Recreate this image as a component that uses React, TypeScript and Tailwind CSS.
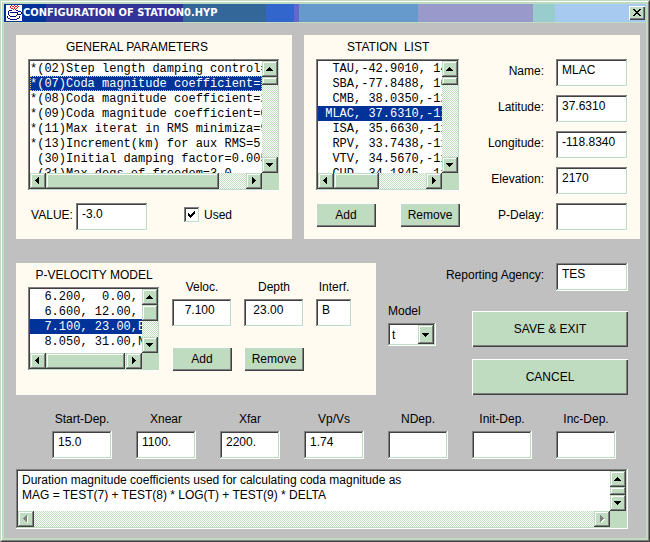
import React from "react";

type Direction = "up" | "down" | "left" | "right";

const sunkenEdge =
  "bg-white shadow-[inset_-1px_-1px_#fff,inset_1px_1px_#808080,inset_-2px_-2px_#c0dcc0,inset_2px_2px_#404040]";
const raised =
  "bg-[#c0dcc0] shadow-[inset_1px_1px_#fff,inset_-1px_-1px_#404040,inset_-2px_-2px_#808080]";
const knob =
  "bg-[#c0dcc0] shadow-[inset_-1px_-1px_#404040,inset_1px_1px_#c0dcc0,inset_-2px_-2px_#808080,inset_2px_2px_#fff]";
const track =
  "bg-[repeating-conic-gradient(#c0dcc0_0_25%,#fff_0_50%)] bg-[length:2px_2px]";

const arrows: Record<Direction, string> = {
  up: "M7 6h1v1h1v1h1v1h1v1H4V9h1V8h1V7h1z",
  down: "M4 6h7v1h-1v1H9v1H8v1H7V9H6V8H5V7H4z",
  left: "M9 4v7H8v-1H7V9H6V8H5V7h1V6h1V5h1V4z",
  right: "M6 4v7h1v-1h1V9h1V8h1V7H9V6H8V5H7V4z",
};

function Arrow({ direction, disabled = false }: { direction: Direction; disabled?: boolean }) {
  return (
    <svg viewBox="0 0 16 16" className="block size-4" shapeRendering="crispEdges" aria-hidden="true">
      {disabled && <path d={arrows[direction]} fill="#fff" transform="translate(1 1)" />}
      <path d={arrows[direction]} fill={disabled ? "#808080" : "#000"} />
    </svg>
  );
}

function ScrollButton({ direction, disabled = false }: { direction: Direction; disabled?: boolean }) {
  return (
    <button type="button" disabled={disabled} aria-label={`Scroll ${direction}`} className={`size-4 shrink-0 ${knob}`}>
      <Arrow direction={direction} disabled={disabled} />
    </button>
  );
}

function VerticalBar({ thumb }: { thumb: string }) {
  return (
    <div className={`flex w-4 flex-col ${track}`}>
      <ScrollButton direction="up" />
      <div className={`${thumb} ${knob}`} />
      <div className="flex-1" />
      <ScrollButton direction="down" />
    </div>
  );
}

function HorizontalBar({ thumb }: { thumb?: string }) {
  return (
    <div className={`flex h-4 ${track}`}>
      <ScrollButton direction="left" disabled={!thumb} />
      {thumb && <div className={`${thumb} ${knob}`} />}
      <div className="flex-1" />
      <ScrollButton direction="right" disabled={!thumb} />
    </div>
  );
}

interface ListProps {
  label: string;
  items: string[];
  selected: number;
  focused?: boolean;
  size: string;
  vThumb: string;
  hThumb: string;
}

function ListBox({ label, items, selected, focused, size, vThumb, hThumb }: ListProps) {
  return (
    <div className={`grid grid-cols-[minmax(0,1fr)_16px] grid-rows-[minmax(0,1fr)_16px] p-[2px] ${size} ${sunkenEdge}`}>
      <ul
        role="listbox"
        aria-label={label}
        className="overflow-hidden font-['Liberation_Mono','Courier_New',monospace] text-[12px] leading-[17px] whitespace-pre"
      >
        {items.map((item, i) => (
          <li
            key={item}
            role="option"
            aria-selected={i === selected}
            className={`h-[15px] ${i === selected ? "bg-[#003399] text-white" : ""} ${
              focused && i === selected ? "outline-1 -outline-offset-1 outline-[#e0c060] outline-dotted" : ""
            }`}
          >
            {item}
          </li>
        ))}
      </ul>
      <VerticalBar thumb={vThumb} />
      <HorizontalBar thumb={hThumb} />
      <div className="bg-[#c0dcc0]" />
    </div>
  );
}

function TextBox({ id, value, width }: { id: string; value: string; width: string }) {
  return (
    <input
      id={id}
      type="text"
      defaultValue={value}
      className={`h-7 shrink-0 rounded-none pt-[2px] pr-1 pb-2 pl-[6px] leading-4 outline-none ${width} ${sunkenEdge}`}
    />
  );
}

function PushButton({ children, size }: { children: React.ReactNode; size: string }) {
  return (
    <button type="button" className={`${size} ${raised}`}>
      {children}
    </button>
  );
}

function SideField({ id, label, value }: { id: string; label: string; value: string }) {
  return (
    <div className="flex justify-end gap-3">
      <label htmlFor={id} className="leading-6">
        {label}
      </label>
      <TextBox id={id} value={value} width="w-[72px]" />
    </div>
  );
}

function TopField({ id, label, value, width }: { id: string; label: string; value: string; width: string }) {
  return (
    <div className={`flex flex-col ${width}`}>
      <label htmlFor={id} className="text-center leading-6 whitespace-nowrap">
        {label}
      </label>
      <TextBox id={id} value={value} width="w-full" />
    </div>
  );
}

const parameters = [
  "*(02)Step length damping control=",
  "*(07)Coda magnitude coefficient=-",
  "*(08)Coda magnitude coefficient=2",
  "*(09)Coda magnitude coefficient=0",
  "*(11)Max iterat in RMS minimiza=9",
  "*(13)Increment(km) for aux RMS=5.",
  " (30)Initial damping factor=0.005",
  " (31)Max degs of freedom=3.0",
];

const stations = [
  "  TAU,-42.9010, 14",
  "  SBA,-77.8488, 16",
  "  CMB, 38.0350,-12",
  " MLAC, 37.6310,-11",
  "  ISA, 35.6630,-11",
  "  RPV, 33.7438,-11",
  "  VTV, 34.5670,-11",
  "  CUD, 34.1845,-11",
];

const layers = ["  6.200,  0.00,", "  6.600, 12.00,", "  7.100, 23.00,B", "  8.050, 31.00,N"];

const stationFields = [
  { id: "name", label: "Name:", value: "MLAC" },
  { id: "latitude", label: "Latitude:", value: "37.6310" },
  { id: "longitude", label: "Longitude:", value: "-118.8340" },
  { id: "elevation", label: "Elevation:", value: "2170" },
  { id: "pdelay", label: "P-Delay:", value: "" },
];

const controlFields = [
  { id: "start", label: "Start-Dep.", value: "15.0" },
  { id: "xnear", label: "Xnear", value: "1100." },
  { id: "xfar", label: "Xfar", value: "2200." },
  { id: "vpvs", label: "Vp/Vs", value: "1.74" },
  { id: "ndep", label: "NDep.", value: "" },
  { id: "init", label: "Init-Dep.", value: "" },
  { id: "inc", label: "Inc-Dep.", value: "" },
];

function JavaCup() {
  return (
    <svg viewBox="0 0 16 16" className="size-4 shrink-0 bg-white" shapeRendering="crispEdges" aria-hidden="true">
      <path
        fill="#e02020"
        d="M5 0h1v1H5zM8 0h1v1H8zM11 0h1v1h-1zM4 1h1v2H4zM6 1h2v1H6zM9 1h2v1H9zM12 1h1v1h-1zM5 3h2v1H5zM8 2h1v2H8zM11 2h1v1h-1zM10 3h1v1h-1zM7 4h1v1H7zM9 4h1v1H9z"
      />
      <path
        fill="#000080"
        d="M3 5h3v1H3zM10 5h2v1h-2zM2 6h1v4H2zM4 7h7v1H4zM12 6h3v1h-3zM11 7h1v3h-1zM15 7h1v2h-1zM12 9h3v1h-3zM3 10h1v1H3zM10 10h1v1h-1zM4 11h6v1H4zM1 11h1v2H1zM13 11h1v2h-1zM2 13h2v1H2zM11 13h2v1h-2zM4 14h7v1H4z"
      />
    </svg>
  );
}

function TitleBar() {
  return (
    <header className="flex h-[18px] items-center bg-[linear-gradient(90deg,#003399_6.5%,#333399_6.5%_27.9%,#336699_27.9%_40.8%,#3366cc_40.8%_45.2%,#6666cc_45.2%_46%,#6699cc_46%_64.5%,#9999cc_64.5%_82.4%,#99cccc_82.4%_85.8%,#a6caf0_85.8%)] pr-px pl-[2px]">
      <JavaCup />
      <h1 className="flex-1 pl-px font-['DejaVu_Sans_Condensed','DejaVu_Sans',sans-serif] text-[11px] leading-[18px] font-bold whitespace-nowrap text-white">
        CONFIGURATION OF STATION0.HYP
      </h1>
      <button type="button" aria-label="Close" className={`flex h-[14px] w-4 justify-center ${raised}`}>
        <svg viewBox="0 0 16 14" className="h-[14px] w-4" shapeRendering="crispEdges" aria-hidden="true">
          <path
            d="M4 3h2v1h1v1h2V4h1V3h2v1h-1v1h-1v1H9v1h1v1h1v1h1v1h-2V9H9V8H7v1H6v1H4V9h1V8h1V7h1V6H6V5H5V4H4z"
            fill="#000"
          />
        </svg>
      </button>
    </header>
  );
}

export default function App() {
  return (
    <div className="border border-t-[#c0dcc0] border-r-[#404040] border-b-[#404040] border-l-[#c0dcc0] font-['Liberation_Sans',Arial,sans-serif] text-[12px] leading-4 text-black">
      <div className="border border-t-white border-r-[#808080] border-b-[#808080] border-l-white bg-[#c0dcc0] p-[2px]">
        <TitleBar />
        <main className="mt-px flex flex-col bg-[#c0c0c0] pt-3 pr-[6px] pb-[9px] pl-3">
          <div className="flex gap-3">
            <section className="w-[276px] shrink-0 bg-[#fffbf0] px-3 pt-1 pb-2">
              <h2 className="mb-1 pl-[38px]">GENERAL PARAMETERS</h2>
              <ListBox
                label="General parameters"
                items={parameters}
                selected={1}
                focused
                size="h-[132px] w-full"
                vThumb="h-2"
                hThumb="w-[173px]"
              />
              <div className="mt-3 flex">
                <label htmlFor="value" className="w-12 text-center leading-6 whitespace-nowrap">
                  VALUE:
                </label>
                <TextBox id="value" value="-3.0" width="w-[72px]" />
                <label className="ml-9 flex h-6 items-center gap-1">
                  <span className="relative size-4">
                    <input type="checkbox" defaultChecked className={`peer block size-4 appearance-none ${sunkenEdge}`} />
                    <svg
                      viewBox="0 0 16 16"
                      className="pointer-events-none absolute inset-0 hidden peer-checked:block"
                      shapeRendering="crispEdges"
                      aria-hidden="true"
                    >
                      <path d="M4 6h1v1h1v1h1V7h1V6h1V5h1V4h1v3h-1v1H9v1H8v1H7v1H6v-1H5V9H4z" fill="#000" />
                    </svg>
                  </span>
                  Used
                </label>
              </div>
            </section>

            <section className="flex flex-1 justify-between bg-[#fffbf0] px-3 pb-2">
              <div className="pt-1">
                <h2 className="mb-1 pl-[31px] whitespace-pre">STATION  LIST</h2>
                <ListBox
                  label="Station list"
                  items={stations}
                  selected={3}
                  size="h-[132px] w-36"
                  vThumb="h-2"
                  hThumb="w-[45px]"
                />
                <div className="mt-3 flex justify-between">
                  <PushButton size="h-6 w-[60px]">Add</PushButton>
                  <PushButton size="h-6 w-[60px]">Remove</PushButton>
                </div>
              </div>
              <div className="flex flex-col gap-2 pt-6">
                {stationFields.map((field) => (
                  <SideField key={field.id} {...field} />
                ))}
              </div>
            </section>
          </div>

          <div className="mt-6 mr-3 flex gap-3">
            <section className="flex h-[132px] w-[360px] shrink-0 gap-3 bg-[#fffbf0] px-3">
              <div className="pt-1">
                <h2 className="mb-1 text-center">P-VELOCITY MODEL</h2>
                <ListBox
                  label="P-velocity model"
                  items={layers}
                  selected={2}
                  size="h-[84px] w-[132px]"
                  vThumb="h-4"
                  hThumb="w-[79px]"
                />
              </div>
              <div className="pt-3">
                <div className="flex gap-3">
                  <TopField id="veloc" label="Veloc." value="  7.100" width="w-[60px]" />
                  <TopField id="depth" label="Depth" value=" 23.00" width="w-[60px]" />
                  <TopField id="interf" label="Interf." value="B" width="w-9" />
                </div>
                <div className="mt-5 flex gap-3">
                  <PushButton size="h-6 w-[60px]">Add</PushButton>
                  <PushButton size="h-6 w-[60px]">Remove</PushButton>
                </div>
              </div>
            </section>

            <div className="flex flex-1 flex-col gap-5">
              <SideField id="agency" label="Reporting Agency:" value="TES" />
              <div className="flex gap-9">
                <div className="-mt-3 flex w-12 flex-col">
                  <label htmlFor="model" className="leading-6">
                    Model
                  </label>
                  <div className={`relative h-[23px] p-[2px] ${sunkenEdge}`}>
                    <select id="model" defaultValue="t" className="block h-full w-full appearance-none pl-[2px] outline-none">
                      <option>t</option>
                    </select>
                    <span
                      className={`pointer-events-none absolute top-[2px] right-[2px] bottom-[2px] flex w-4 items-center ${knob}`}
                    >
                      <Arrow direction="down" />
                    </span>
                  </div>
                </div>
                <div className="flex flex-1 flex-col gap-3">
                  <PushButton size="h-9 w-full">SAVE &amp; EXIT</PushButton>
                  <PushButton size="h-9 w-full">CANCEL</PushButton>
                </div>
              </div>
            </div>
          </div>

          <div className="mt-3 mr-6 flex justify-between pl-9">
            {controlFields.map((field) => (
              <TopField key={field.id} {...field} width="w-[60px]" />
            ))}
          </div>

          <div
            className={`mt-[10px] mr-3 grid h-[60px] grid-cols-[minmax(0,1fr)_16px] grid-rows-[minmax(0,1fr)_16px] p-[2px] ${sunkenEdge}`}
          >
            <textarea
              aria-label="Description"
              readOnly
              className="h-full w-full resize-none overflow-hidden px-1 pt-[2px] leading-[15px] outline-none"
              defaultValue={
                "Duration magnitude coefficients used for calculating coda magnitude as\nMAG = TEST(7) + TEST(8) * LOG(T) + TEST(9) * DELTA"
              }
            />
            <VerticalBar thumb="h-2" />
            <HorizontalBar />
            <div className="bg-[#c0dcc0]" />
          </div>
        </main>
      </div>
    </div>
  );
}
